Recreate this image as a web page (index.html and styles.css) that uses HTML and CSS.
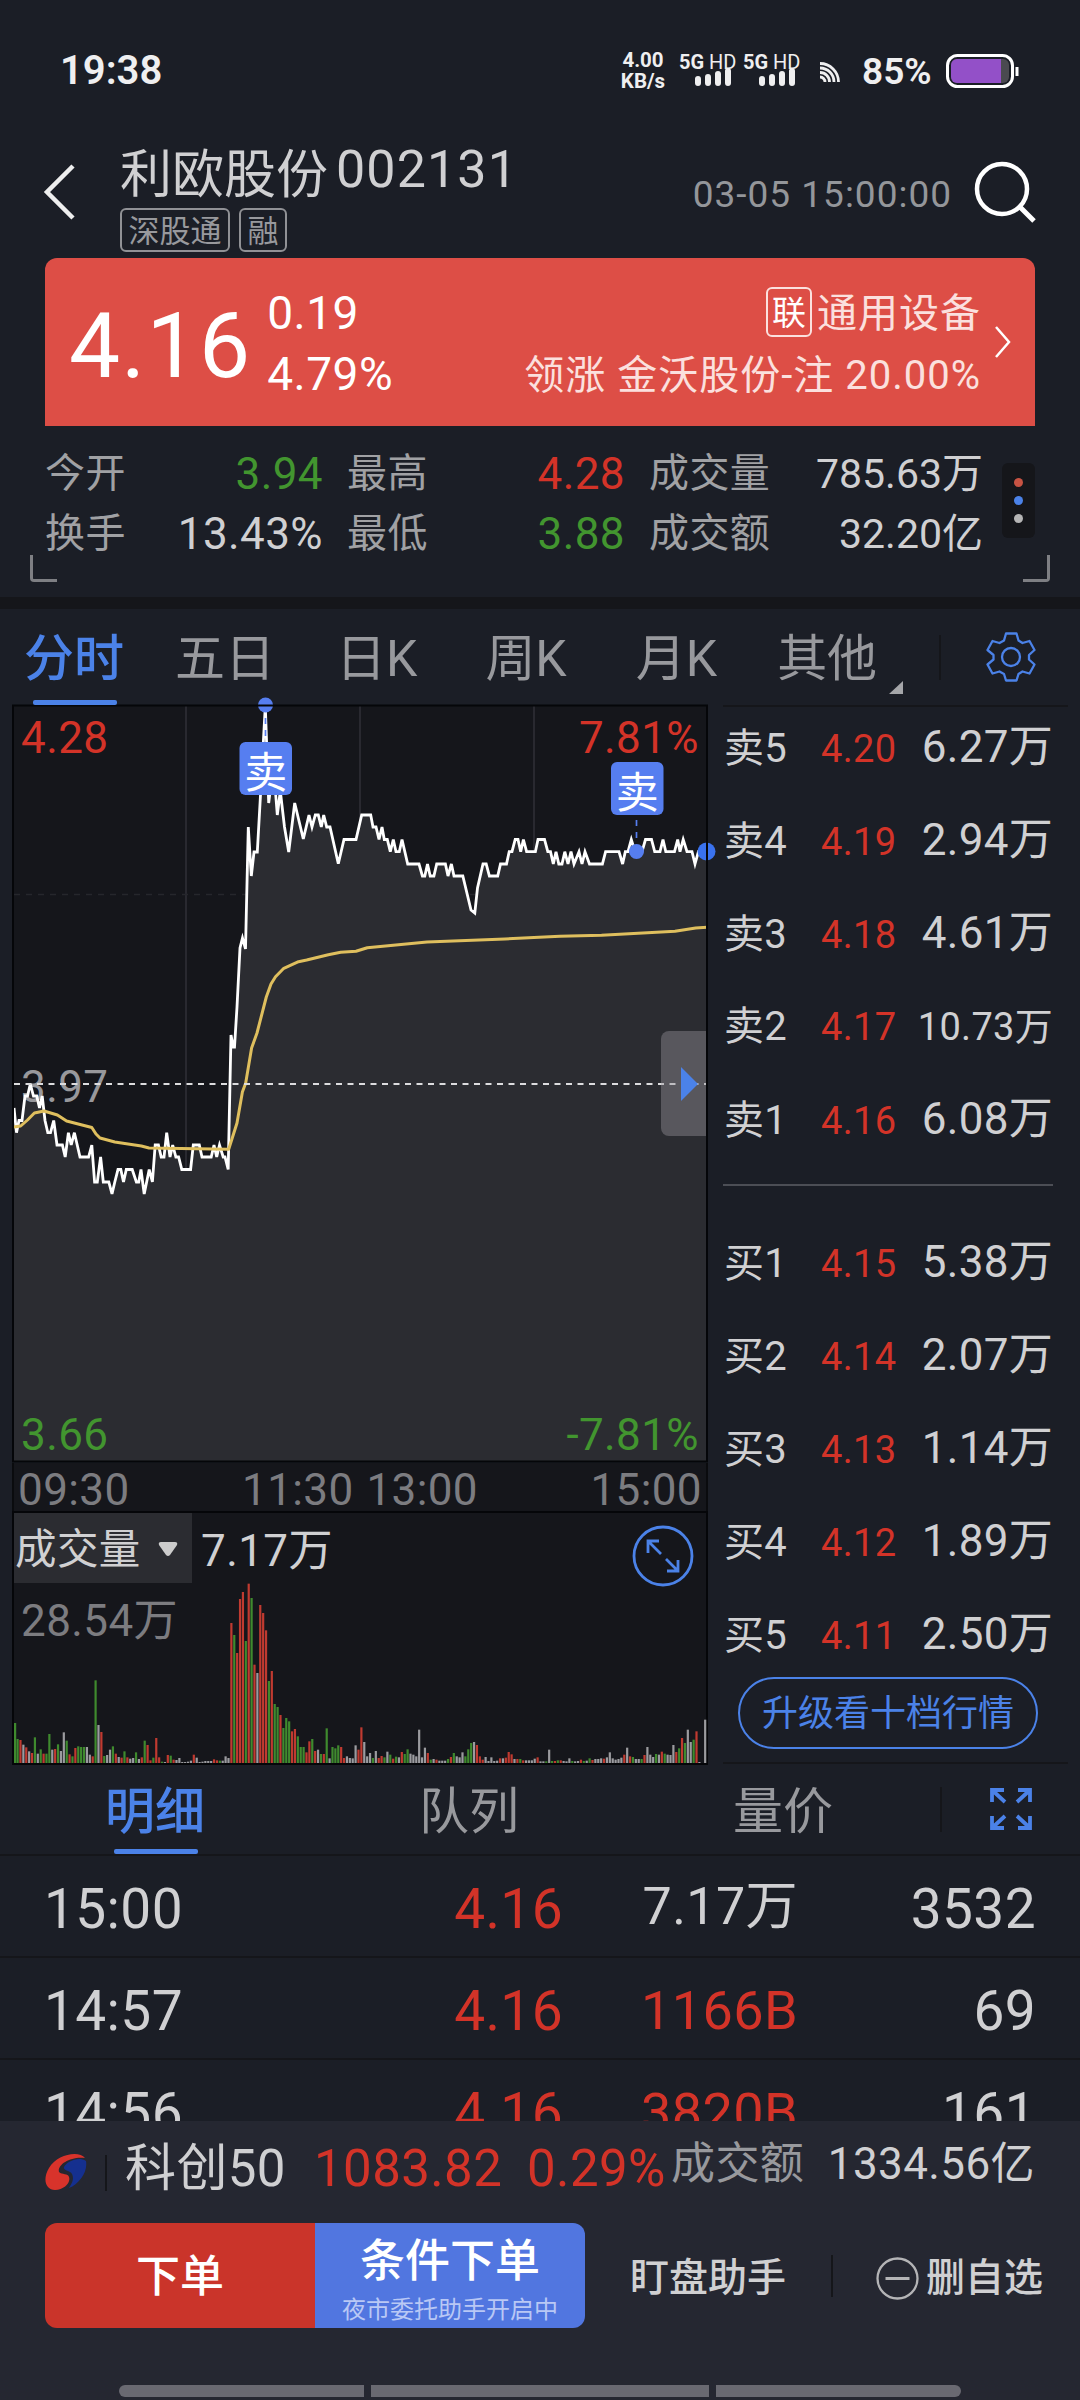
FILE: index.html
```html
<!DOCTYPE html>
<html lang="zh-CN">
<head>
  <meta charset="UTF-8" />
  <meta name="viewport" content="width=device-width, initial-scale=1.0"/>
  <title>利欧股份 002131</title>
  <link rel="stylesheet" href="styles.css">
</head>
<body>

  <!-- Status bar -->
  <div id="status-bar">
    <span class="clock">19:38</span>
    <div class="net-speed">4.00<br>KB/s</div>
    <div class="sim">
      <div><b>5G</b> HD</div>
      <svg width="38" height="18" viewBox="0 0 38 18"><path d="M4 11v4M14 9v6M24 6v9M34 3v12" stroke="#efeff0" stroke-width="6" stroke-linecap="round"/></svg>
    </div>
    <div class="sim">
      <div><b>5G</b> HD</div>
      <svg width="38" height="18" viewBox="0 0 38 18"><path d="M4 11v4M14 9v6M24 6v9M34 3v12" stroke="#efeff0" stroke-width="6" stroke-linecap="round"/></svg>
    </div>
    <svg class="cast" width="20" height="20" viewBox="0 0 20 20" fill="none" stroke="#efeff0" stroke-width="2.8"><path d="M0 1.5A18.5 18.5 0 0 1 18.5 20M0 6A14 14 0 0 1 14 20M0 10.5A9.500 9.500 0 0 1 9.500 20M0 15A5 5 0 0 1 5 20"/></svg>
    <span class="battery-text">85%</span>
    <svg class="battery" width="73" height="34" viewBox="0 0 73 34">
      <rect x="1.500" y="1.500" width="65" height="31" rx="10" fill="none" stroke="#fff" stroke-width="3"/>
      <rect x="5" y="5" width="58" height="24" rx="6" fill="#4a4a50"/>
      <path d="M11 5h44v24H11a6 6 0 0 1-6-6V11a6 6 0 0 1 6-6z" fill="#9350c8"/>
      <path d="M71 13v9" stroke="#fff" stroke-width="3"/>
    </svg>
  </div>

  <!-- Title -->
  <div id="header">
    <svg class="back" width="34" height="58" viewBox="0 0 34 58" fill="none" stroke="#eee" stroke-width="4.500"><path d="M30 3L4 29l26 26"/></svg>
    <div class="stock">
      <div class="stock-name">利欧股份<span>002131</span></div>
      <div class="tags"><span>深股通</span><span>融</span></div>
    </div>
    <span class="date">03-05 15:00:00</span>
    <svg class="search" width="62" height="62" viewBox="0 0 62 62" fill="none" stroke="#fff" stroke-width="4.500"><circle cx="28" cy="28" r="25"/><path d="M45 45l15 15" stroke-width="5"/></svg>
  </div>

  <!-- Price card -->
  <div id="price-card">
    <div class="price">4.16</div>
    <div class="change"><div>0.19</div><div>4.79%</div></div>
    <div class="sector">
      <div><span class="link-tag">联</span>通用设备</div>
      <div>领涨 金沃股份-注 20.00%</div>
    </div>
    <svg width="18" height="34" viewBox="0 0 18 34" fill="none" stroke="#fff" stroke-width="2.500"><path d="M2 2l13 15L2 32"/></svg>
  </div>

  <div id="stats">
    <div class="stats-grid">
      <span>今开</span><b class="down">3.94</b><span>最高</span><b class="up">4.28</b><span>成交量</span><b class="small">785.63万</b>
      <span>换手</span><b>13.43%</b><span>最低</span><b class="down">3.88</b><span>成交额</span><b class="small">32.20亿</b>
    </div>
    <div class="more"><i></i><i></i><i></i></div>
    <div class="corner left"></div>
    <div class="corner right"></div>
  </div>

  <!-- Period tabs -->
  <div id="period-tabs">
    <span class="tab active">分时</span>
    <span class="tab">五日</span>
    <span class="tab">日K</span>
    <span class="tab">周K</span>
    <span class="tab">月K</span>
    <span class="tab other">其他</span>
    <span class="sep"></span>
    <svg class="gear" width="50" height="50" viewBox="-25 -25 50 50" fill="none" stroke="#4b82e8" stroke-width="2.300" stroke-linejoin="round"><path d="M-5-23.500H5.500L7.500-16.500L11.500-14L18.500-16L23.500-7L18-2V2.500L23.500 7.500L18.500 16.500L11.500 14.500L7.500 17L5.500 23.500H-5L-7 17L-11.500 14.500L-18.500 16.500L-23.500 7.500L-17.500 2.500V-2L-23.500-7L-18.500-16L-11.500-14L-7-16.500Z"/><circle r="9"/></svg>
  </div>

  <div id="quote">
    <div class="charts">
      <svg id="price-chart" width="696" height="759" viewBox="12 704 696 759">
        <rect x="13" y="705.500" width="694" height="756" fill="#15161b"/>
        <path d="M186 706V1461M360 706V1461M534 706V1461" stroke="#303138" stroke-width="1.500"/>
        <path d="M14 894.500H707" stroke="#26272c" stroke-width="1.500" stroke-dasharray="6 6"/>
        <path id="price-area" fill="#2b2c31"/>
        <text x="21" y="1102" fill="#98989c">3.97</text>
        <polyline id="price-line" fill="none" stroke="#fff" stroke-width="2.800" points="14,1108 16.5,1132.700 19,1120.500 22,1120.500 25,1096 27.500,1096 30.300,1084 33.500,1096 36.700,1096 39.500,1108 42.200,1096 45,1120.500 47.800,1132.700 50.500,1132.700 53.700,1120.500 57,1145 62.400,1145 65.200,1157 68.400,1132.700 71.200,1145 74.400,1132.700 80,1157 88.600,1157 91.800,1145 94.600,1182 97.300,1182 100.600,1157 103.300,1182 108.800,1182 112,1194 114.800,1182 118,1169.500 120.800,1169.500 123.500,1182 126.300,1169.500 132.200,1169.500 136.400,1182 138.700,1182 141,1169.500 144.200,1194 149.200,1169.500 152.400,1182 155.200,1145 158.400,1145 161.200,1157 164,1157 166.700,1132.700 170,1157 172.700,1145 175.900,1157 178.600,1157 181.800,1169.500 190.600,1169.500 193.300,1145 199.300,1145 202,1157 211.200,1157 214,1145 216.700,1157 219.500,1145 223.200,1157 225,1157 228.200,1169.500 231,1035 233.300,1047 234.500,1047 237,1007 240,948 242.500,938 245.500,949 248.300,827 251.300,876 254,852 257.300,852 260.500,795 265.300,706 268.700,803 271.600,779 274.500,779 277.300,815 280.300,791 284.500,827 288.700,852 294.700,803 303.300,839 309,815 312,827 315.300,815 318.300,815 321.300,827 323.700,815 326.700,827 330,827 338.300,863.700 344,839.500 356,839.500 361.700,815 370.700,815 373,827 376,827 379,839.500 382,827 384.300,839.500 387.300,839.500 390.300,851.700 393.300,839.500 396,851.700 399.300,851.700 402,839.500 407.700,864 419,864 422.400,876 424.800,876 427.500,864 430.200,876 433.900,876 436.700,864 445.400,864 448,876 451.400,864 454,876 462.800,876 471,910 474.800,913 477.500,888 483,864 486.200,864 489.400,876 497.700,876 500.500,864 506.500,864 509.200,851.700 512,851.700 515.200,839.500 518,839.500 520.700,851.700 523.400,839.500 526.600,851.700 535.400,851.700 538,839.500 544.500,839.500 547.800,851.700 550.500,851.700 553.300,864 556,851.700 558.800,864 562,864 564.800,851.700 568,864 571,851.700 574,864 579,851.700 582,864 585,851.700 589.500,864 602.400,864 605.600,851.700 619,851.700 622.600,864 625.300,851.700 628,851.700 631.300,839.500 635,851.700 642,851.700 645.500,839.500 651.500,839.500 654.700,851.700 660,851.700 663,839.500 665.800,851.700 674.500,851.700 677.700,839.500 680,851.700 683.200,839.500 687,851.700 692,851.700 695,864 698.400,851.700 707,851.700"/>
        <polyline fill="none" stroke="#dfbf5e" stroke-width="3" stroke-linejoin="round" points="14,1127 20.700,1126 27.500,1120 34.400,1113 44,1111 57.400,1115 66.600,1121 91.800,1127.500 96,1134 100,1138 114.800,1142 141.400,1146 149,1148 228.700,1149.300 237,1123 242.400,1092 245.700,1083 251.600,1048 257,1033 266.300,997 271,984 275.500,976.700 283.800,968.300 298.500,961.700 306.700,960 328.300,954.700 340.700,952.300 356,951.300 367.300,947.700 427,942 505,939 560,936.300 601.500,935.300 675,931.300 695.700,928 707,927.300"/>
        <path d="M14 1084H707" stroke="#dcdcde" stroke-width="2" stroke-dasharray="6 5.500"/>
        <g class="up-text">
          <text x="21" y="753">4.28</text>
          <text x="699" y="753" text-anchor="end">7.81%</text>
        </g>
        <g class="down-text">
          <text x="21" y="1450">3.66</text>
          <text x="699" y="1450" text-anchor="end">-7.81%</text>
        </g>
        <!-- sell markers -->
        <circle cx="265.500" cy="705" r="7.500" fill="#567ef0"/>
        <circle cx="636.500" cy="851.500" r="7.500" fill="#567ef0"/>
        <circle cx="706.500" cy="851.500" r="9" fill="#3a72ee"/>
        <path d="M265.500 718v24M636.500 820v24" stroke="#567ef0" stroke-width="1.700" stroke-dasharray="6 6"/>
        <rect x="239.500" y="742" width="52.500" height="53" rx="6" fill="#567ef0"/>
        <rect x="611" y="762" width="52.500" height="53" rx="6" fill="#567ef0"/>
        <text x="266" y="788" class="mark">卖</text>
        <text x="637.500" y="808" class="mark">卖</text>
        <path d="M669 1031H707V1136H669a8 8 0 0 1-8-8V1039a8 8 0 0 1 8-8z" fill="#96949a" fill-opacity=".42"/>
        <path d="M681 1067v34l17-17z" fill="#4b82e8"/>
        <rect x="13" y="705.500" width="694" height="756" fill="none" stroke="#050609" stroke-width="2"/>
      </svg>

      <div class="time-axis">
        <span>09:30</span><span class="noon">11:30 13:00</span><span>15:00</span>
      </div>

      <div class="volume">
        <div class="volume-head">
          <span class="volume-select">成交量<svg width="22" height="18" viewBox="0 0 22 18"><path d="M4 2h14q3 0 2 3l-7 10q-2 2-4 0L2 5q-1-3 2-3z" fill="#ccc"/></svg></span>
          <span>7.17万</span>
          <svg class="expand" width="62" height="62" viewBox="-31 -31 62 62" fill="none" stroke="#4b82e8" stroke-width="2.800"><circle r="29"/><path d="M-15-3V-15H-4M-15-15L-2-2M3 3L15 15M15 4V15H4"/></svg>
        </div>
        <div class="volume-max">28.54万</div>
        <svg id="volume-bars" width="694" height="180" viewBox="0 0 694 180"></svg>
      </div>
    </div>

    <!-- Order book -->
    <div class="book">
      <div class="level"><span>卖5</span><b>4.20</b><em>6.27万</em></div>
      <div class="level"><span>卖4</span><b>4.19</b><em>2.94万</em></div>
      <div class="level"><span>卖3</span><b>4.18</b><em>4.61万</em></div>
      <div class="level"><span>卖2</span><b>4.17</b><em class="long">10.73万</em></div>
      <div class="level"><span>卖1</span><b>4.16</b><em>6.08万</em></div>
      <hr>
      <div class="level"><span>买1</span><b>4.15</b><em>5.38万</em></div>
      <div class="level"><span>买2</span><b>4.14</b><em>2.07万</em></div>
      <div class="level"><span>买3</span><b>4.13</b><em>1.14万</em></div>
      <div class="level"><span>买4</span><b>4.12</b><em>1.89万</em></div>
      <div class="level"><span>买5</span><b>4.11</b><em>2.50万</em></div>
      <div class="upgrade">升级看十档行情</div>
    </div>
  </div>

  <!-- Trades -->
  <div id="detail-tabs">
    <span class="tab active">明细</span>
    <span class="tab">队列</span>
    <span class="tab">量价</span>
    <span class="sep"></span>
    <svg class="full" width="44" height="44" viewBox="0 0 44 44" fill="none" stroke="#4b82e8" stroke-width="3.800"><path d="M3 15V3H15M3 3L16 15M29 3H41V15M41 3L28 15M3 29V41H15M3 41L16 29M29 41H41V29M41 41L28 29"/></svg>
  </div>
  <div id="trades">
    <div class="trade"><span>15:00</span><span class="up">4.16</span><span class="wan">7.17万</span><span>3532</span></div>
    <div class="trade"><span>14:57</span><span class="up">4.16</span><span class="up lots">1166B</span><span>69</span></div>
    <div class="trade"><span>14:56</span><span class="up">4.16</span><span class="up lots">3820B</span><span>161</span></div>
  </div>

  <!-- Bottom bar -->
  <div id="footer">
    <div class="index">
      <svg width="42" height="38" viewBox="0 0 42 38">
        <path d="M40 5C34-3 12 1 4 15C-3 27 1 37 10 37C19 37 26 30 24 24C23 20 17 22 14 19C12 12 25 3 40 5Z" fill="#d8332b"/>
        <path d="M41 8C34 3 22 8 19 14C18 18 25 17 27 21C30 27 25 33 24 35C34 31 43 19 41 8Z" fill="#15308f"/>
      </svg>
      <i class="bar"></i>
      <span class="index-name">科创50</span>
      <span class="up index-price">1083.82</span>
      <span class="up index-pct">0.29%</span>
      <span class="amount-label">成交额</span>
      <span class="amount">1334.56亿</span>
    </div>
    <div class="actions">
      <div class="order">下单</div>
      <div class="order cond">条件下单<small>夜市委托助手开启中</small></div>
      <span class="watch">盯盘助手</span>
      <i class="bar"></i>
      <svg width="43" height="43" viewBox="0 0 43 43" fill="none" stroke="#b4b4b6" stroke-width="2.300"><circle cx="21.500" cy="21.500" r="20"/><path d="M9.500 21.500h24" stroke-width="3"/></svg>
      <span class="remove">删自选</span>
    </div>
    <div class="nav-hints"><i></i><i></i><i></i></div>
  </div>

  <script>
    // close the area under the price line
    const line = document.getElementById('price-line');
    document.getElementById('price-area').setAttribute('d',
      'M14,1461 L' + line.getAttribute('points') + ' L707,1461 Z');

    // one bar per minute: direction (g down, r up, w flat) + volume
    const volumes = `g120 g72 r69 w55 r47 w35 r30 g77 w28 g41 r28 g28 g87 w40 r42 g56 w36 w92 g67 r26
      g20 r45 g50 g48 g48 w48 w25 r20 g248 w114 r93 g21 w24 w40 g50 r28 w18 r16 g35 r17
      w13 w15 g32 w12 r17 g67 r54 r8 g16 r75 r17 g4 w3 r24 g22 r10 w9 w15 w3 w3
      w4 w7 r25 w16 w3 w4 w6 w6 w6 r11 r8 g7 w7 w20 w15 r420 g384 r330 r492 r513
      g366 r538 g495 r295 w270 r474 r450 r398 g246 r276 g177 g168 r144 g105 g135 g125 r95 r102 g80 g48
      g48 r32 r65 g72 r36 w40 g27 r27 g104 w14 g48 g44 g53 r48 r15 w20 w15 w14 w53 r40
      r107 w63 w20 w30 g15 w36 r15 r21 g17 w34 g25 r13 g19 w17 r33 g27 g41 w28 w25 w20
      w100 w17 w46 r30 g10 w12 r10 w7 w7 w7 g12 r18 g30 w20 w17 w32 g20 g41 g60 w63
      r54 r20 r10 w18 w6 w17 w6 w7 r14 w14 r16 r33 r26 w12 r12 g12 r8 w8 w8 w8
      w13 r17 w5 w5 g5 w40 g6 r6 g8 r8 w6 w5 w14 g6 w5 w6 r10 g6 w7 g14
      r9 w12 w12 w14 r13 w17 w32 w14 w10 w12 w16 r25 w46 r20 g18 w12 w12 g12 r24 w48
      w25 w18 g27 w25 r34 g28 w25 w24 w54 r33 g44 r75 g60 w100 w63 g70 r95 w3 w0 w130`.split(/\s+/);
    const colors = { g: '#3f8a2e', r: '#c03a30', w: '#9b9b9f' };
    const bars = document.getElementById('volume-bars');
    volumes.forEach((v, i) => {
      const h = v.slice(1) / 3;
      const rect = document.createElementNS('http://www.w3.org/2000/svg', 'rect');
      rect.setAttribute('x', Math.max(0, i * 2.889 - 0.4));
      rect.setAttribute('y', 180 - h);
      rect.setAttribute('width', 2.2);
      rect.setAttribute('height', h);
      rect.setAttribute('fill', colors[v[0]]);
      bars.appendChild(rect);
    });
  </script>
</body>
</html>
```
FILE: styles.css
```css
* {
  box-sizing: border-box;
}

body {
  margin: 0;
  width: 1080px;
  height: 2400px;
  overflow: hidden;
  background: #1b1e26;
  color: #d0d0d2;
  font-family: Roboto, 'Noto Sans CJK SC', sans-serif;
  display: flex;
  flex-direction: column;
}

b, em, i {
  font-weight: 400;
  font-style: normal;
}

svg {
  display: block;
  flex: none;
}

.up { color: #d33328; }
.down { color: #42952f; }

/* status bar */
#status-bar {
  height: 140px;
  padding: 0 61px 0 60px;
  display: flex;
  align-items: center;
  color: #efeff0;
}

.clock {
  font-size: 40px;
  font-weight: 600;
  margin-right: auto;
}

.net-speed {
  width: 46px;
  font-size: 20.5px;
  line-height: 21px;
  font-weight: 700;
  text-align: center;
  white-space: nowrap;
  margin: 2px 14px 0 0;
}

.sim {
  width: 64px;
  height: 40px;
  font-size: 20px;
  line-height: 22px;
  white-space: nowrap;
  margin-top: 4px;
  margin-left: -1px;
  margin-right: 1px;
}

.sim b { font-weight: 700; }
.sim div { height: 17px; margin-top: -1px; }
.sim svg { margin-left: 15px; }

.cast { margin: 3px 22px 0 12px; }

.battery-text {
  width: 68px;
  font-size: 37px;
  font-weight: 600;
  white-space: nowrap;
  margin: 3px 16px 0 0;
}

.battery { margin-top: 2px; }

/* header */
#header {
  height: 118px;
  padding: 6px 44px 0 43px;
  display: flex;
}

.back { margin: 17px 43px 0 0; }

.stock-name {
  height: 60px;
  display: flex;
  align-items: center;
  font-size: 52px;
  line-height: 60px;
}

.stock-name span {
  padding: 0 0 12px 8px;
  letter-spacing: 1.1px;
}

.tags {
  display: flex;
  gap: 9px;
  margin-top: 2px;
}

.tags span {
  height: 44px;
  padding: 0 6.5px;
  border: 2px solid #909195;
  border-radius: 6px;
  color: #98999d;
  font-size: 31px;
  line-height: 44px;
}

.date {
  margin: 27px 22px 0 auto;
  font-size: 37px;
  line-height: 44px;
  letter-spacing: 1px;
  color: #94969a;
}

.search { margin-top: 15px; }

/* price card */
#price-card {
  height: 168px;
  margin: 0 45px;
  padding: 0 23px;
  border-radius: 12px 12px 0 0;
  background: #dd4e46;
  color: #fff;
  display: flex;
  align-items: center;
}

.price {
  font-size: 91px;
  line-height: 100px;
  letter-spacing: 1.2px;
  margin: 8px 16px 0 1px;
}

.change {
  font-size: 46px;
  line-height: 61px;
  letter-spacing: 0.5px;
  margin-top: 3px;
}

.sector {
  margin: 6px 13px 0 auto;
  color: #fbe0de;
  font-size: 40px;
  line-height: 62px;
  letter-spacing: 1px;
}

.sector div {
  display: flex;
  justify-content: flex-end;
  align-items: center;
  white-space: pre;
}

.link-tag {
  width: 46px;
  height: 50px;
  margin: 0 5px 4px 0;
  border: 2px solid #fbe0de;
  border-radius: 6px;
  color: #fff;
  font-size: 34px;
  line-height: 49px;
  text-align: center;
  letter-spacing: 0;
}

/* stats */
#stats {
  position: relative;
  height: 171px;
  padding: 18px 45px 0;
  display: flex;
}

.stats-grid {
  width: 938px;
  height: 120px;
  display: grid;
  grid-template-columns: 84px 194px 105px 197px 146px 1fr;
  grid-template-rows: 60px 60px;
  align-items: center;
  font-size: 40px;
  letter-spacing: 0.4px;
  color: #a0a1a4;
}

.stats-grid span {
  line-height: 52px;
}

.stats-grid span:nth-child(6n + 3),
.stats-grid span:nth-child(6n + 5) { padding-left: 24px; }

.stats-grid b {
  font-size: 44px;
  line-height: 54px;
  text-align: right;
  color: #d0d0d2;
}

.stats-grid b.small {
  font-size: 41px;
  line-height: 54px;
  letter-spacing: 0;
}

.stats-grid b.up { color: #d33328; }
.stats-grid b.down { color: #42952f; }

.more {
  width: 33px;
  height: 75px;
  margin: 19px 0 0 19px;
  border-radius: 6px;
  background: #15161a;
  display: flex;
  flex-direction: column;
  align-items: center;
  justify-content: center;
  gap: 9px;
}

.more i {
  width: 9px;
  height: 9px;
  border-radius: 50%;
  background: #b5b5b5;
}

.more i:nth-child(1) { background: #c75343; }
.more i:nth-child(2) { background: #4b82e8; }

.corner {
  position: absolute;
  bottom: 15px;
  width: 27px;
  height: 27px;
  border-bottom: 3px solid #7e7f83;
}

.corner.left {
  left: 30px;
  border-left: 3px solid #7e7f83;
  border-bottom-left-radius: 4px;
}

.corner.right {
  right: 30px;
  border-right: 3px solid #7e7f83;
  border-bottom-right-radius: 4px;
}

/* tabs */
#period-tabs,
#detail-tabs {
  display: flex;
  align-items: center;
  font-size: 50px;
  color: #98999d;
}

#period-tabs {
  height: 108px;
  border-top: 12px solid #15161a;
  padding-left: 24px;
}

.tab {
  position: relative;
  height: 96px;
  line-height: 101px;
}

.tab.active {
  color: #4b82e8;
  font-weight: 500;
}

.tab.active::after {
  content: "";
  position: absolute;
  left: 9px;
  bottom: 0;
  width: 84px;
  height: 5px;
  border-radius: 2px;
  background: #4b82e8;
}

#period-tabs .tab:nth-child(2) { margin-left: 51px; }
#period-tabs .tab:nth-child(3) { margin-left: 61px; }
#period-tabs .tab:nth-child(4) { margin-left: 68px; }
#period-tabs .tab:nth-child(5) { margin-left: 69px; }
#period-tabs .tab:nth-child(6) { margin-left: 60px; }

.tab.other::after {
  content: "";
  position: absolute;
  right: -26px;
  bottom: 11px;
  border-left: 14px solid transparent;
  border-bottom: 13px solid #a5a6a9;
}

.sep {
  width: 2px;
  height: 45px;
  background: #15161a;
}

#period-tabs .sep { margin: 0 45px 0 62px; }

/* charts + order book */
#quote {
  height: 1059px;
  display: flex;
  padding-left: 12px;
}

.charts {
  width: 696px;
  margin-top: -1px;
}

#price-chart {
  overflow: visible;
  font-size: 44px;
  letter-spacing: 0.4px;
}

.up-text { fill: #d33328; }
.down-text { fill: #42952f; }

.mark {
  fill: #fff;
  font-size: 43px;
  text-anchor: middle;
}

.time-axis {
  height: 48px;
  padding: 0 4px 0 4px;
  border: 2px solid #0a0b0e;
  border-width: 0 2px;
  background: #15161b;
  display: flex;
  justify-content: space-between;
  font-size: 44px;
  line-height: 54px;
  letter-spacing: 0.4px;
  color: #7c7c80;
}

.noon {
  margin-right: 0;
  word-spacing: 1.5px;
}

.volume {
  position: relative;
  height: 254px;
  border: 2px solid #050609;
  background: #15161b;
  font-size: 44px;
  letter-spacing: 0.4px;
}

.volume-head {
  height: 70px;
  display: flex;
  line-height: 76px;
}

.volume-select {
  width: 178px;
  height: 70px;
  margin-right: 9px;
  padding-left: 1px;
  background: #2b2c31;
  font-size: 41.5px;
  display: flex;
  align-items: flex-start;
  line-height: 74px;
}

.volume-select svg { margin: 27px 0 0 16px; }

.expand { margin: 12px 12px 0 auto; }

.volume-max {
  padding-left: 7px;
  line-height: 76px;
  color: #7c7c80;
}

#volume-bars {
  position: absolute;
  left: 0;
  bottom: 0;
}

.book {
  width: 345px;
  margin-left: 15px;
  border-top: 2px solid #15161a;
  border-bottom: 2px solid #15161a;
}

.level {
  height: 93px;
  margin: 0 15px 0 1px;
  line-height: 93px;
  display: grid;
  grid-template-columns: 97px 90px 1fr;
  align-items: baseline;
  font-size: 44px;
  letter-spacing: 0.3px;
}

.level:first-child { margin-top: -6px; }
.level span { font-size: 40px; }
.level b { font-size: 38px; color: #d33328; }
.level em { text-align: right; white-space: nowrap; }
.level em.long { font-size: 38px; margin-left: -10px; }

.book hr {
  height: 2px;
  margin: 18px 15px 30px 0;
  border: 0;
  background: #4c4e55;
}

.upgrade {
  width: 300px;
  height: 72px;
  margin: -4px 0 0 15px;
  border: 2px solid #4b82e8;
  border-radius: 36px;
  font-size: 36px;
  line-height: 71px;
  text-align: center;
  color: #4b82e8;
}

/* trades */
#detail-tabs {
  height: 92px;
  padding-left: 105px;
  border-bottom: 2px solid #15161a;
}

#detail-tabs .tab { height: 90px; line-height: 96px; }
#detail-tabs .tab + .tab { margin-left: 214px; }
#detail-tabs .sep { margin: 0 47px 0 107px; }

#trades {
  height: 265px;
  overflow: hidden;
}

.trade {
  height: 102px;
  padding: 0 44px;
  border-bottom: 2px solid #15161a;
  display: grid;
  grid-template-columns: 200px 319px 235px 1fr;
  font-size: 55px;
  line-height: 106px;
  letter-spacing: 0.4px;
}

.trade span + span { text-align: right; }
.trade .wan { font-size: 52px; line-height: 101px; }
.trade .lots { font-size: 54px; }

/* footer */
#footer {
  flex: 1;
  background: #252731;
}

.index {
  height: 102px;
  padding: 0 45px;
  display: flex;
  font-size: 51px;
  line-height: 96px;
  letter-spacing: 0.4px;
  white-space: nowrap;
}

.index svg { margin-top: 32px; }

.bar {
  width: 2px;
  background: #15161a;
}

.index .bar { height: 36px; margin: 34px 18px 0 18px; }
.index-name { width: 189px; }
.index-price { width: 213px; }
.index-pct { width: 144px; }

.amount-label,
.amount {
  font-size: 44px;
  line-height: 86px;
  color: #98999d;
}

.amount {
  margin-left: auto;
  color: #d0d0d2;
}

.actions {
  height: 105px;
  padding-left: 45px;
  display: flex;
  align-items: center;
  font-size: 39px;
  font-weight: 500;
}

.order {
  width: 270px;
  height: 105px;
  border-radius: 12px 0 0 12px;
  background: #ca342a;
  color: #fff;
  font-size: 44px;
  line-height: 108px;
  text-align: center;
}

.order.cond {
  border-radius: 0 12px 12px 0;
  background: #5176e0;
  font-size: 45px;
  line-height: 77px;
}

.order small {
  display: block;
  margin-top: -5px;
  font-size: 24px;
  line-height: 30px;
  font-weight: 400;
  color: #b9c8f5;
}

.watch,
.remove { padding-bottom: 3px; }

.watch { margin-left: 45px; }
.actions .bar { height: 42px; margin: 0 43px 0 45px; }
.actions svg { margin: 5px 7px 0 0; }

.nav-hints {
  margin: 57px 119px 0;
  height: 12px;
  display: flex;
  gap: 7px;
}

.nav-hints i {
  flex: 245;
  background: #696971;
}

.nav-hints i:nth-child(1) { border-radius: 6px 0 0 6px; }
.nav-hints i:nth-child(2) { flex: 338; }
.nav-hints i:nth-child(3) { border-radius: 0 6px 6px 0; }
```
